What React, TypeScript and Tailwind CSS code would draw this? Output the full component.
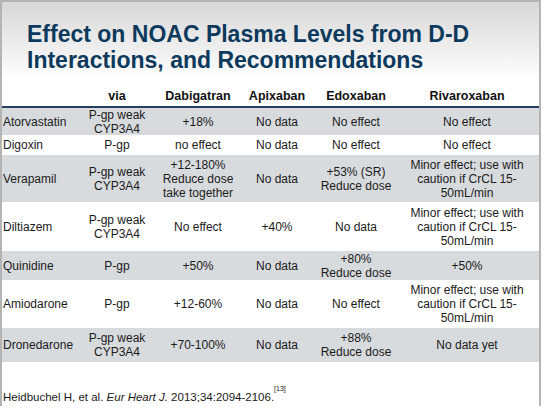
const rows = [
  { drug: "Atorvastatin", via: ["P-gp weak", "CYP3A4"], dabi: ["+18%"], apix: ["No data"], edox: ["No effect"], riva: ["No effect"], h: "h-[28px]", gray: true },
  { drug: "Digoxin", via: ["P-gp"], dabi: ["no effect"], apix: ["No data"], edox: ["No effect"], riva: ["No effect"], h: "h-[19px]", gray: false },
  { drug: "Verapamil", via: ["P-gp weak", "CYP3A4"], dabi: ["+12-180%", "Reduce dose", "take together"], apix: ["No data"], edox: ["+53% (SR)", "Reduce dose"], riva: ["Minor effect; use with", "caution if CrCL 15-", "50mL/min"], h: "h-[48px]", gray: true },
  { drug: "Diltiazem", via: ["P-gp weak", "CYP3A4"], dabi: ["No effect"], apix: ["+40%"], edox: ["No data"], riva: ["Minor effect; use with", "caution if CrCL 15-", "50mL/min"], h: "h-[48px]", gray: false },
  { drug: "Quinidine", via: ["P-gp"], dabi: ["+50%"], apix: ["No data"], edox: ["+80%", "Reduce dose"], riva: ["+50%"], h: "h-[30px]", gray: true },
  { drug: "Amiodarone", via: ["P-gp"], dabi: ["+12-60%"], apix: ["No data"], edox: ["No effect"], riva: ["Minor effect; use with", "caution if CrCL 15-", "50mL/min"], h: "h-[47px]", gray: false },
  { drug: "Dronedarone", via: ["P-gp weak", "CYP3A4"], dabi: ["+70-100%"], apix: ["No data"], edox: ["+88%", "Reduce dose"], riva: ["No data yet"], h: "h-[35px]", gray: true },
];

// column widths picked to line the centres up with the slide
const cols = "grid grid-cols-[73px_84px_78px_80px_78px_1fr]";

function Lines({ lines }: { lines: string[] }) {
  return (
    <>
      {lines.map((l, i) => (
        <span key={i} className="block whitespace-nowrap">
          {l}
        </span>
      ))}
    </>
  );
}

export default function App() {
  return (
    <div className="w-[545px] h-[414px] bg-white overflow-hidden font-['Liberation_Sans',Arial,sans-serif]">
      <div className="w-[541px] h-[406px] border-t-2 border-l-2 border-r-2 border-[#b4b4b4] flex flex-col">
        <div className="h-[78px] bg-gradient-to-b from-[#d7d7d7] to-white pl-[25px] pt-[19px]">
          <h1 className="text-[23px] leading-[26px] font-bold text-[#0d3a5c]">
            Effect on NOAC Plasma Levels from D-D
            <br />
            Interactions, and Recommendations
          </h1>
        </div>

        <div className={`${cols} h-[28px] items-end pb-[3px] text-[12.5px] leading-[14px] font-bold text-[#111] border-b-2 border-[#24405e]`}>
          <div />
          <div className="text-center">via</div>
          <div className="text-center">Dabigatran</div>
          <div className="text-center">Apixaban</div>
          <div className="text-center">Edoxaban</div>
          <div className="text-center">Rivaroxaban</div>
        </div>

        {rows.map((r) => (
          <div
            key={r.drug}
            className={`${cols} ${r.h} items-center text-[12px] leading-[14px] text-[#1a1a1a] border-b border-white ${r.gray ? "bg-[#d8dbde]" : "bg-white"}`}
          >
            <div className="pl-[1px] whitespace-nowrap">{r.drug}</div>
            <div className="text-center">
              <Lines lines={r.via} />
            </div>
            <div className="text-center">
              <Lines lines={r.dabi} />
            </div>
            <div className="text-center">
              <Lines lines={r.apix} />
            </div>
            <div className="text-center">
              <Lines lines={r.edox} />
            </div>
            <div className="text-center">
              <Lines lines={r.riva} />
            </div>
          </div>
        ))}

        <p className="mt-[27px] pl-[1px] text-[11.5px] leading-[14px] text-[#1a1a1a] whitespace-nowrap">
          Heidbuchel H, et al. <i>Eur Heart J.</i> 2013;34:2094-2106.
          <sup className="text-[7px] align-top relative top-[-1px]">[13]</sup>
        </p>
      </div>
    </div>
  );
}
